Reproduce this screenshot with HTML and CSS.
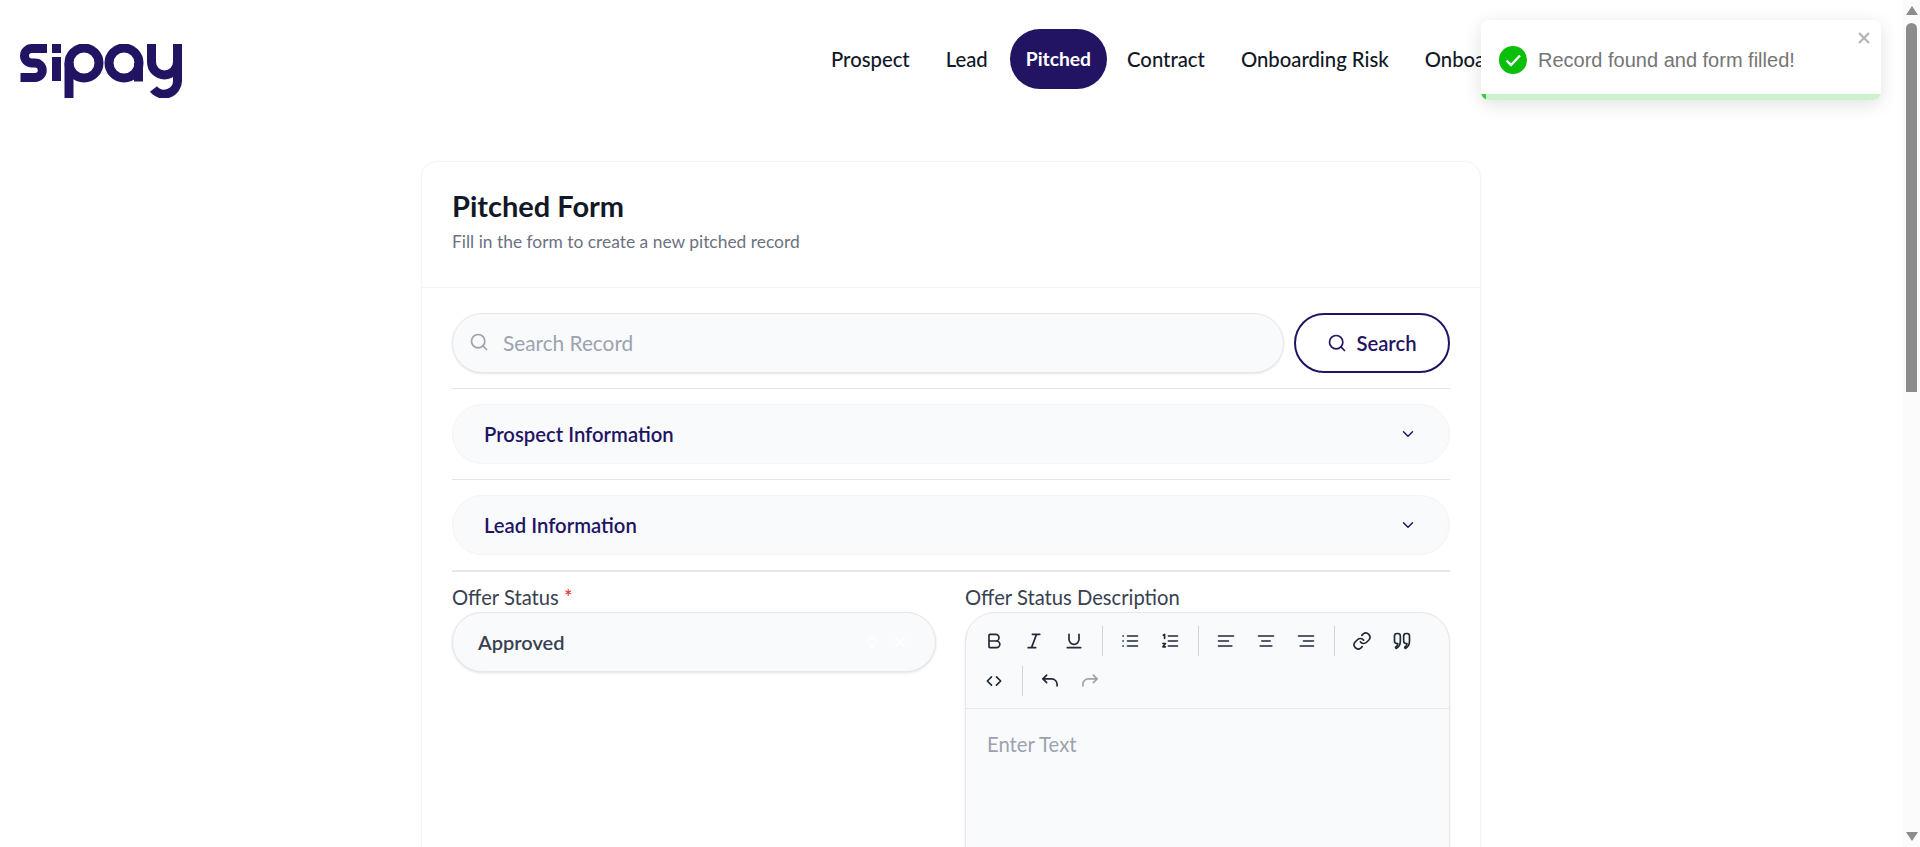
FILE: index.html
```html
<!DOCTYPE html>
<html lang="en">
<head>
  <meta charset="UTF-8" />
  <title>Pitched Form</title>
  <link rel="stylesheet" href="styles.css">
</head>
<body>

<div class="page">
  <header class="topbar">
    <svg class="logo" viewBox="0 0 163 54" aria-label="Sipay">
      <g fill="none" stroke="#221463" stroke-width="9">
        <path d="M28 4.500H12.750A7.250 7.250 0 0 0 12.750 19H16A7.250 7.250 0 0 1 16 33.500H1.500"/>
        <path d="M37.500 13V37"/>
        <circle cx="65" cy="19" r="15"/>
        <path d="M50 19V54"/>
        <circle cx="105" cy="19" r="15"/>
        <path d="M119.500 19V37.500"/>
        <path d="M132.500 0V18a13 13 0 0 0 26 0V0"/>
        <path d="M158.500 17V36a13.500 13.500 0 0 1-24 9"/>
      </g>
      <rect x="33" y="0" width="9" height="9" fill="#221463"/>
    </svg>
    <nav class="nav">
      <a href="#">Prospect</a>
      <a href="#">Lead</a>
      <a href="#" class="active">Pitched</a>
      <a href="#">Contract</a>
      <a href="#">Onboarding Risk</a>
      <a href="#">Onboarding</a>
    </nav>
  </header>

  <main class="card">
    <div class="card-head">
      <h1>Pitched Form</h1>
      <p>Fill in the form to create a new pitched record</p>
    </div>

    <div class="card-body">
      <div class="search-row">
        <div class="search-box">
          <svg class="icon" viewBox="0 0 24 24"><circle cx="11" cy="11" r="8"/><path d="m21 21-4.300-4.300"/></svg>
          <span>Search Record</span>
        </div>
        <button class="search-btn">
          <svg class="icon" viewBox="0 0 24 24"><circle cx="11" cy="11" r="8"/><path d="m21 21-4.300-4.300"/></svg>
          Search
        </button>
      </div>
      <div class="rule"></div>

      <div class="accordion">
        <span>Prospect Information</span>
        <svg class="chevron" viewBox="0 0 24 24"><path d="m6 9 6 6 6-6"/></svg>
      </div>
      <div class="rule"></div>

      <div class="accordion">
        <span>Lead Information</span>
        <svg class="chevron" viewBox="0 0 24 24"><path d="m6 9 6 6 6-6"/></svg>
      </div>
      <div class="rule thick"></div>

      <div class="form-grid">
        <div class="field">
          <label>Offer Status <em>*</em></label>
          <div class="select">
            <span>Approved</span>
            <svg class="ghost" viewBox="0 0 24 24"><path d="m7 10 5-5 5 5M7 14l5 5 5-5"/></svg>
            <svg class="ghost" viewBox="0 0 24 24"><path d="M6 6l12 12M18 6 6 18"/></svg>
          </div>
        </div>

        <div class="field">
          <label>Offer Status Description</label>
          <div class="editor">
            <div class="toolbar">
              <button><svg viewBox="0 0 24 24"><path d="M6 12h9a4 4 0 0 1 0 8H7a1 1 0 0 1-1-1V5a1 1 0 0 1 1-1h7a4 4 0 0 1 0 8"/></svg></button>
              <button><svg viewBox="0 0 24 24"><path d="M19 4h-9M14 20H5M15 4 9 20"/></svg></button>
              <button><svg viewBox="0 0 24 24"><path d="M6 4v6a6 6 0 0 0 12 0V4M4 20h16"/></svg></button>
              <i class="sep"></i>
              <button><svg viewBox="0 0 24 24"><path d="M9 6h12M9 12h12M9 18h12M3.500 6h.5M3.500 12h.5M3.500 18h.5"/></svg></button>
              <button><svg viewBox="0 0 24 24"><path d="M10 6h11M10 12h11M10 18h11M4 5l1.500-1v5M3.500 15h3L3.500 19h3"/></svg></button>
              <i class="sep"></i>
              <button><svg viewBox="0 0 24 24"><path d="M3 6h18M3 12h12M3 18h16"/></svg></button>
              <button><svg viewBox="0 0 24 24"><path d="M3 6h18M7 12h10M5 18h14"/></svg></button>
              <button><svg viewBox="0 0 24 24"><path d="M3 6h18M9 12h12M5 18h16"/></svg></button>
              <i class="sep"></i>
              <button><svg viewBox="0 0 24 24"><path d="M10 13a5 5 0 0 0 7.500.5l3-3a5 5 0 0 0-7-7l-1.700 1.700"/><path d="M14 11a5 5 0 0 0-7.500-.5l-3 3a5 5 0 0 0 7 7l1.700-1.700"/></svg></button>
              <button><svg viewBox="0 0 24 24"><path d="M3 6a3 3 0 0 1 3-3h1a3 3 0 0 1 3 3v6c0 5-2 7.500-5 9l-.8-1.500c1.800-1 2.800-2.500 2.800-4.500H6a3 3 0 0 1-3-3zM14 6a3 3 0 0 1 3-3h1a3 3 0 0 1 3 3v6c0 5-2 7.500-5 9l-.8-1.500c1.800-1 2.800-2.500 2.800-4.500h-1a3 3 0 0 1-3-3z"/></svg></button>
              <button><svg viewBox="0 0 24 24"><path d="m9 7-5 5 5 5M15 7l5 5-5 5"/></svg></button>
              <i class="sep"></i>
              <button><svg viewBox="0 0 24 24"><path d="M8 5 3.500 9.500 8 14"/><path d="M4 9.500h10a6.500 6.500 0 0 1 6.500 6.500v2"/></svg></button>
              <button class="off"><svg viewBox="0 0 24 24"><path d="M16 5l4.500 4.500L16 14"/><path d="M20 9.500H10A6.500 6.500 0 0 0 3.500 16v2"/></svg></button>
            </div>
            <div class="editor-text">Enter Text</div>
          </div>
        </div>
      </div>
    </div>
  </main>
</div>

<!-- the browser's scrollbar as it stands in the screenshot -->
<aside class="scrollbar">
  <span class="arrow up"></span>
  <span class="thumb"></span>
  <span class="arrow down"></span>
</aside>

<div class="toast">
  <svg class="toast-icon" viewBox="0 0 28 28">
    <circle cx="14" cy="14" r="14" fill="#0abf0a"/>
    <path d="M7.500 14.500l4.500 4.500 9-9.500" fill="none" stroke="#fff" stroke-width="2.400"/>
  </svg>
  <span>Record found and form filled!</span>
  <svg class="toast-close" viewBox="0 0 12 12"><path d="M1 1l10 10M11 1 1 11"/></svg>
  <div class="toast-bar"></div>
</div>

</body>
</html>
```

FILE: styles.css
```css
* {
  box-sizing: border-box;
}

html, body {
  margin: 0;
  height: 100%;
  overflow: hidden;
}

body {
  display: flex;
  background: #fff;
  color: #111827;
  font-family: "Lato", "Noto Sans", sans-serif;
}

.page {
  flex: 1;
  min-width: 0;
  height: 100vh;
  overflow: hidden;
}

/* Header */
.topbar {
  display: flex;
  align-items: center;
  height: 118px;
  padding-left: 19px;
  overflow: hidden;
}

.logo {
  flex: none;
  width: 163px;
  height: 54px;
  margin-top: 24px;
}

.nav {
  display: flex;
  flex: none;
  gap: 4px;
  margin-left: 633px;
}

.nav a {
  display: block;
  padding: 0 16px;
  height: 60px;
  line-height: 60px;
  border-radius: 30px;
  color: #111827;
  font-size: 20.300px;
  font-weight: 500;
  text-decoration: none;
}

.nav a.active {
  margin-left: 2px;
  background: #221463;
  color: #fff;
  font-size: 19.300px;
  font-weight: 700;
}

/* Card */
.card {
  width: 1060px;
  margin: 43px 0 0 421px;
  border: 1px solid #f3f4f6;
  border-radius: 16px;
  box-shadow: 0 1px 3px rgba(0,0,0,0.04);
}

.card-head {
  height: 126px;
  padding: 26px 30px 0;
  border-bottom: 1px solid #f3f4f6;
}

.card-head h1 {
  margin: 0;
  font-size: 29px;
  font-weight: 700;
  line-height: 36px;
}

.card-head p {
  margin: 6px 0 0;
  color: #6b7280;
  font-size: 17.400px;
  line-height: 24px;
}

.card-body {
  display: flex;
  flex-direction: column;
  gap: 15px;
  padding: 25px 30px 0;
}

.search-row {
  display: flex;
  gap: 10px;
}

.search-box {
  flex: 1;
  display: flex;
  align-items: center;
  gap: 14px;
  height: 60px;
  padding: 0 0 2px 16px;
  background: #f9fafb;
  border: 1px solid #e5e7eb;
  border-radius: 30px;
  box-shadow: 0 1px 2px rgba(0,0,0,0.1);
  color: #9ca3af;
  font-size: 20.800px;
}

.icon {
  width: 20px;
  height: 20px;
  fill: none;
  stroke: currentColor;
  stroke-width: 2;
  stroke-linecap: round;
  stroke-linejoin: round;
}

.search-btn {
  display: flex;
  align-items: center;
  justify-content: center;
  gap: 9px;
  width: 156px;
  height: 60px;
  background: #fff;
  border: 2px solid #221463;
  border-radius: 30px;
  color: #221463;
  font-family: inherit;
  font-size: 20.300px;
  font-weight: 600;
}

.rule {
  height: 1px;
  background: #e5e7eb;
}

.rule.thick {
  height: 2px;
}

.accordion {
  display: flex;
  align-items: center;
  justify-content: space-between;
  height: 60px;
  padding: 0 31px;
  background: #f9fafb;
  border: 1px solid #f3f4f6;
  border-radius: 30px;
  color: #221463;
  font-size: 20.300px;
  font-weight: 600;
}

.chevron {
  width: 18px;
  height: 18px;
  margin-right: 1px;
  fill: none;
  stroke: #221463;
  stroke-width: 2;
  stroke-linecap: round;
  stroke-linejoin: round;
}

.form-grid {
  display: grid;
  grid-template-columns: 484px 485px;
  justify-content: space-between;
  margin-top: -1px;
}

.field label {
  display: block;
  height: 26px;
  color: #374151;
  font-size: 20.200px;
  line-height: 22px;
}

.field em {
  color: #ef2b2d;
  font-style: normal;
}

.select {
  display: flex;
  align-items: center;
  height: 60px;
  padding: 0 26px 0 25px;
  background: #f9fafb;
  border: 1px solid #e5e7eb;
  border-radius: 30px;
  box-shadow: 0 1px 3px rgba(0,0,0,0.12);
  color: #374151;
  font-size: 20px;
  font-weight: 600;
}

.select span {
  flex: 1;
}

.ghost {
  width: 18px;
  height: 18px;
  margin-left: 10px;
  fill: none;
  stroke: #fff;
  stroke-width: 2;
}

.editor {
  min-height: 320px;
  background: #f9fafb;
  border: 1px solid #e5e7eb;
  border-radius: 30px 30px 0 0;
  box-shadow: 0 1px 3px rgba(0,0,0,0.08);
}

.toolbar {
  display: flex;
  flex-wrap: wrap;
  align-items: center;
  padding: 8px 8px 7px;
  border-bottom: 1px solid #e5e7eb;
}

.toolbar button {
  display: flex;
  align-items: center;
  justify-content: center;
  width: 40px;
  height: 40px;
  padding: 0;
  background: none;
  border: 0;
  color: #1f2937;
}

.toolbar button.off {
  color: #9ca3af;
}

.toolbar svg {
  width: 20px;
  height: 20px;
  fill: none;
  stroke: currentColor;
  stroke-width: 2;
  stroke-linecap: round;
  stroke-linejoin: round;
}

.sep {
  width: 1px;
  height: 30px;
  margin: 0 7.500px;
  background: #d1d5db;
}

.editor-text {
  padding: 23px 21px;
  color: #9ca3af;
  font-size: 20.300px;
}

/* Fake scrollbar */
.scrollbar {
  flex: none;
  display: flex;
  flex-direction: column;
  align-items: center;
  width: 17px;
  height: 100vh;
  padding: 6px 0;
  background: #fbfbfb;
}

.arrow {
  flex: none;
  width: 0;
  height: 0;
  border-left: 6px solid transparent;
  border-right: 6px solid transparent;
}

.arrow.up {
  border-bottom: 9px solid #8c8c8c;
}

.arrow.down {
  margin-top: auto;
  border-top: 9px solid #8c8c8c;
}

.thumb {
  width: 11px;
  height: 369px;
  margin-top: 8px;
  background: #8c8c8c;
  border-radius: 6px 6px 0 0;
}

/* Toast */
.toast {
  position: absolute;
  top: 20px;
  left: 1481px;
  display: flex;
  align-items: center;
  gap: 11px;
  width: 400px;
  height: 80px;
  padding: 0 18px;
  background: #fff;
  border-radius: 8px;
  overflow: hidden;
  box-shadow: 0 4px 18px rgba(0,0,0,0.12);
  color: #757575;
  font-family: "Liberation Sans", Arial, sans-serif;
  font-size: 20px;
}

.toast-icon {
  flex: none;
  width: 28px;
  height: 28px;
}

.toast-close {
  position: absolute;
  top: 12px;
  right: 11px;
  width: 12px;
  height: 12px;
  fill: none;
  stroke: #b3b3b3;
  stroke-width: 2;
}

.toast-bar {
  position: absolute;
  left: 0;
  bottom: 0;
  width: 100%;
  height: 6px;
  background: #cdf2cf;
  border-left: 5px solid #3ecb42;
}
```
